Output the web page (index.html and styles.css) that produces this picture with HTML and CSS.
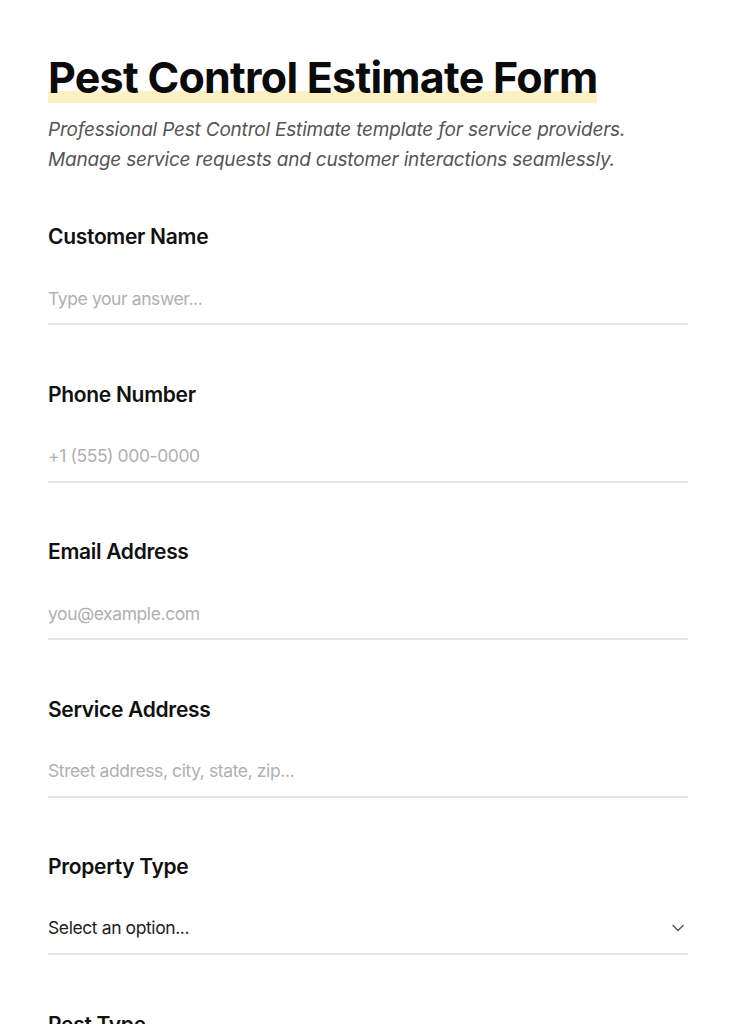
FILE: index.html
```html
<!DOCTYPE html>
<html>
<head>
    <title>Pest Control Estimate Form</title>
    <link rel="stylesheet" href="styles.css">
</head>
<body>
    <main class="form-page">
        <!-- Header -->
        <header class="form-head">
            <h1><span class="title-mark">Pest Control Estimate Form</span></h1>
            <p class="intro">Professional Pest Control Estimate template for service providers. Manage service requests and customer interactions seamlessly.</p>
        </header>

        <!-- Fields -->
        <form class="fields">
            <div class="field">
                <label for="customerName">Customer Name</label>
                <input type="text" id="customerName" placeholder="Type your answer...">
            </div>
            <div class="field">
                <label for="phone">Phone Number</label>
                <input type="text" id="phone" placeholder="+1 (555) 000-0000">
            </div>
            <div class="field">
                <label for="email">Email Address</label>
                <input type="text" id="email" placeholder="you@example.com">
            </div>
            <div class="field">
                <label for="address">Service Address</label>
                <input type="text" id="address" placeholder="Street address, city, state, zip...">
            </div>
            <div class="field">
                <label for="propertyType">Property Type</label>
                <div class="select-wrap">
                    <select id="propertyType">
                        <option>Select an option...</option>
                        <option>Residential</option>
                        <option>Commercial</option>
                    </select>
                    <svg class="chevron" width="14" height="14" viewBox="0 0 14 14" fill="none" stroke="#555" stroke-width="1.4" stroke-linecap="round" stroke-linejoin="round"><path d="M2 4.5 L7 9.5 L12 4.5"/></svg>
                </div>
            </div>
            <div class="field">
                <label for="pestType">Pest Type</label>
                <div class="select-wrap">
                    <select id="pestType">
                        <option>Select an option...</option>
                    </select>
                </div>
            </div>
        </form>
    </main>
</body>
</html>
```
FILE: styles.css
```css
body {
    margin: 0;
    padding: 0;
    background-color: #fff;
    color: #111;
    font-family: Inter, "Noto Sans", sans-serif;
}
.form-page {
    padding: 51px 48px 40px;
}
h1 {
    margin: 0;
    font-size: 43px;
    line-height: 53px;
    font-weight: 700;
    letter-spacing: -0.75px;
    color: #0b0b0b;
}
.title-mark {
    background: linear-gradient(to bottom, transparent 77%, #fdf0c2 77%);
}
.intro {
    margin: 11px 0 0;
    font-size: 19px;
    line-height: 30px;
    font-style: italic;
    color: #555;
    letter-spacing: -0.2px;
    max-width: 600px;
}
.fields {
    margin-top: 48px;
}
.field {
    margin-bottom: 55.5px;
}
label {
    display: block;
    font-size: 21px;
    line-height: 28px;
    font-weight: 600;
    letter-spacing: -0.3px;
    color: #111;
    margin-bottom: 22px;
}
input[type="text"], select {
    display: block;
    width: 100%;
    box-sizing: border-box;
    padding: 12px 0;
    border: none;
    border-bottom: 2px solid #e6e6e6;
    font-family: inherit;
    font-size: 17.5px;
    line-height: 26px;
    height: 52px;
    color: #222;
    background: transparent;
    outline: none;
    letter-spacing: -0.4px;
}
input::placeholder {
    color: #b0b0b0;
}
select {
    appearance: none;
    -webkit-appearance: none;
    border-radius: 0;
}
.select-wrap {
    position: relative;
}
.chevron {
    position: absolute;
    right: 3px;
    top: 18px;
}
```
